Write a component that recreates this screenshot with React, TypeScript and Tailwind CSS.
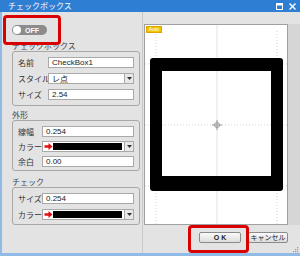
import React from 'react'

const jp = "font-['Noto_Sans_CJK_JP',sans-serif]"
const latin = "font-['Liberation_Sans',sans-serif]"

function DropButton() {
  return (
    <div className="w-[9px] h-full border-l border-[#a9a9a9] bg-[#e8e8e8] flex items-center justify-center">
      <svg width="5" height="3" viewBox="0 0 5 3">
        <path d="M0 0 L5 0 L2.5 3 Z" fill="#333" />
      </svg>
    </div>
  )
}

function TextField({ value }: { value: string }) {
  return (
    <div className={`flex-1 h-[11px] bg-white border border-[#a9a9a9] flex items-center pl-[3px] text-[8px] leading-none text-[#222] ${latin}`}>
      {value}
    </div>
  )
}

function SelectField({ value }: { value: string }) {
  return (
    <div className="flex-1 h-[11px] bg-white border border-[#a9a9a9] flex items-center">
      <span className="flex-1 pl-[3px] text-[8px] leading-none text-[#222]">{value}</span>
      <DropButton />
    </div>
  )
}

function ColorField() {
  return (
    <div className="flex-1 h-[11px] bg-white border border-[#a9a9a9] flex items-center">
      <svg width="9" height="9" viewBox="0 0 9 9" className="ml-[1px]">
        <path d="M0.5 3.2 H4.5 V1 L8.5 4.5 L4.5 8 V5.8 H0.5 Z" fill="#e01010" />
      </svg>
      <div className="flex-1 h-[7px] bg-black mr-[2px]" />
      <DropButton />
    </div>
  )
}

function Row({ label, labelW, children }: { label: string; labelW: string; children: React.ReactNode }) {
  return (
    <div className="flex items-center h-[11px]">
      <span className={`${labelW} text-[8px] leading-none text-[#333] whitespace-nowrap`}>{label}</span>
      {children}
    </div>
  )
}

function GroupLabel({ text, h }: { text: string; h: string }) {
  return (
    <div className={`${h} flex items-end pb-[1px] text-[8px] leading-[9px] text-[#444]`}>
      {text}
    </div>
  )
}

export default function App() {
  return (
    <div className={`relative w-[300px] h-[256px] flex flex-col overflow-hidden bg-[#e3e3e3] ${jp}`}>
      {/* Title bar */}
      <div className="h-[13px] bg-[#2e7ed3] flex items-center pl-[8px] pr-[4px] text-white text-[8px] leading-none">
        <span>チェックボックス</span>
        <div className="ml-auto flex items-center gap-[6px]">
          <svg width="7" height="7" viewBox="0 0 7 7">
            <rect x="0.5" y="0.5" width="6" height="6" fill="none" stroke="#fff" />
            <rect x="0.5" y="0.5" width="6" height="2" fill="#fff" />
          </svg>
          <svg width="7" height="7" viewBox="0 0 7 7">
            <path d="M0.5 0.5 L6.5 6.5 M6.5 0.5 L0.5 6.5" stroke="#fff" strokeWidth="1.4" />
          </svg>
        </div>
      </div>

      {/* Body */}
      <div className="flex-1 flex border-l-2 border-b-[3px] border-[#8fbbe6]">
        {/* Left panel */}
        <div className="w-[141px] flex flex-col pl-[10px] pr-[2px] border-r border-[#c8c8c8]">
          <div className="mt-[13px] w-[35px] h-[10px] rounded-full bg-[#8c8c8c] flex items-center pl-[1px]">
            <div className="w-[8px] h-[8px] rounded-full bg-white" />
            <span className={`ml-[4px] text-[7px] leading-none text-white font-bold ${latin}`}>OFF</span>
          </div>

          <GroupLabel text="チェックボックス" h="h-[16px]" />
          <div className="h-[55px] border border-[#a8a8a8] rounded-[3px] pt-[5px] pl-[5px] pr-[5px] flex flex-col gap-[5px]">
            <Row label="名前" labelW="w-[30px]"><TextField value="CheckBox1" /></Row>
            <Row label="スタイル" labelW="w-[30px]"><SelectField value="レ点" /></Row>
            <Row label="サイズ" labelW="w-[30px]"><TextField value="2.54" /></Row>
          </div>

          <GroupLabel text="外形" h="h-[14px]" />
          <div className="h-[51px] border border-[#a8a8a8] rounded-[3px] pt-[5px] pl-[5px] pr-[5px] flex flex-col gap-[4px]">
            <Row label="線幅" labelW="w-[24px]"><TextField value="0.254" /></Row>
            <Row label="カラー" labelW="w-[24px]"><ColorField /></Row>
            <Row label="余白" labelW="w-[24px]"><TextField value="0.00" /></Row>
          </div>

          <GroupLabel text="チェック" h="h-[16px]" />
          <div className="h-[38px] border border-[#a8a8a8] rounded-[3px] pt-[5px] pl-[5px] pr-[5px] flex flex-col gap-[5px]">
            <Row label="サイズ" labelW="w-[24px]"><TextField value="0.254" /></Row>
            <Row label="カラー" labelW="w-[24px]"><ColorField /></Row>
          </div>
        </div>

        {/* Right panel */}
        <div className="flex-1 flex flex-col pl-[1px]">
          <div className="flex">
            <div className="relative mt-[12px] w-[144px] h-[201px] bg-white border border-[#a0a0a0]">
              <svg width="142" height="199" viewBox="0 0 142 199" className="block">
                <line x1="72" y1="0" x2="72" y2="199" stroke="#e2e2e2" strokeWidth="1" />
                <line x1="11" y1="6" x2="11" y2="199" stroke="#d4d4d4" strokeDasharray="1 2" />
                <line x1="132" y1="6" x2="132" y2="199" stroke="#d4d4d4" strokeDasharray="1 2" />
                <line x1="0" y1="39" x2="142" y2="39" stroke="#d4d4d4" strokeDasharray="1 2" />
                <line x1="0" y1="100" x2="142" y2="100" stroke="#d4d4d4" strokeDasharray="1 2" />
                <line x1="0" y1="161" x2="142" y2="161" stroke="#d4d4d4" strokeDasharray="1 2" />
                <rect x="5" y="33" width="133" height="133" rx="3" fill="#000" />
                <rect x="17" y="46" width="109" height="105" fill="#fff" />
                <line x1="72" y1="46" x2="72" y2="151" stroke="#e2e2e2" />
                <line x1="17" y1="100" x2="126" y2="100" stroke="#d4d4d4" strokeDasharray="1 2" />
                <circle cx="72" cy="100" r="2.5" fill="none" stroke="#999" />
                <path d="M72 95 V105 M67 100 H77" stroke="#999" strokeWidth="1" />
              </svg>
              <div className={`absolute left-[1px] top-[1px] w-[16px] h-[7px] bg-[#f2c200] border border-[#d9a800] text-white text-[5px] leading-[5px] flex items-center justify-center ${latin}`}>
                Auto
              </div>
            </div>
            <div className="flex-1 mt-[12px] h-[201px] bg-[#d6d6d6]" />
          </div>

          <div className="mt-[7px] flex items-center">
            <div className={`ml-[55px] w-[42px] h-[11px] border border-[#8a8a8a] rounded-[2px] bg-gradient-to-b from-[#fbfbfb] to-[#dcdcdc] flex items-center justify-center text-[7px] leading-none text-[#222] font-bold ${latin}`}>
              O K
            </div>
            <div className="ml-[7px] w-[40px] h-[11px] border border-[#8a8a8a] rounded-[2px] bg-gradient-to-b from-[#fbfbfb] to-[#dcdcdc] flex items-center justify-center text-[7px] leading-none text-[#222]">
              キャンセル
            </div>
          </div>
          <div className="flex justify-end pr-[1px] mt-[3px]">
            <svg width="7" height="7" viewBox="0 0 7 7">
              <rect x="5" y="1" width="1.2" height="1.2" fill="#999" />
              <rect x="3" y="3" width="1.2" height="1.2" fill="#999" />
              <rect x="5" y="3" width="1.2" height="1.2" fill="#999" />
              <rect x="1" y="5" width="1.2" height="1.2" fill="#999" />
              <rect x="3" y="5" width="1.2" height="1.2" fill="#999" />
              <rect x="5" y="5" width="1.2" height="1.2" fill="#999" />
            </svg>
          </div>
        </div>
      </div>

      {/* Red highlight boxes */}
      <div className="absolute left-[3px] top-[15px] w-[58px] h-[30px] border-[3px] border-[#d80000] rounded-[4px]" />
      <div className="absolute left-[188px] top-[225px] w-[61px] h-[28px] border-[3px] border-[#d80000] rounded-[4px]" />
    </div>
  )
}
